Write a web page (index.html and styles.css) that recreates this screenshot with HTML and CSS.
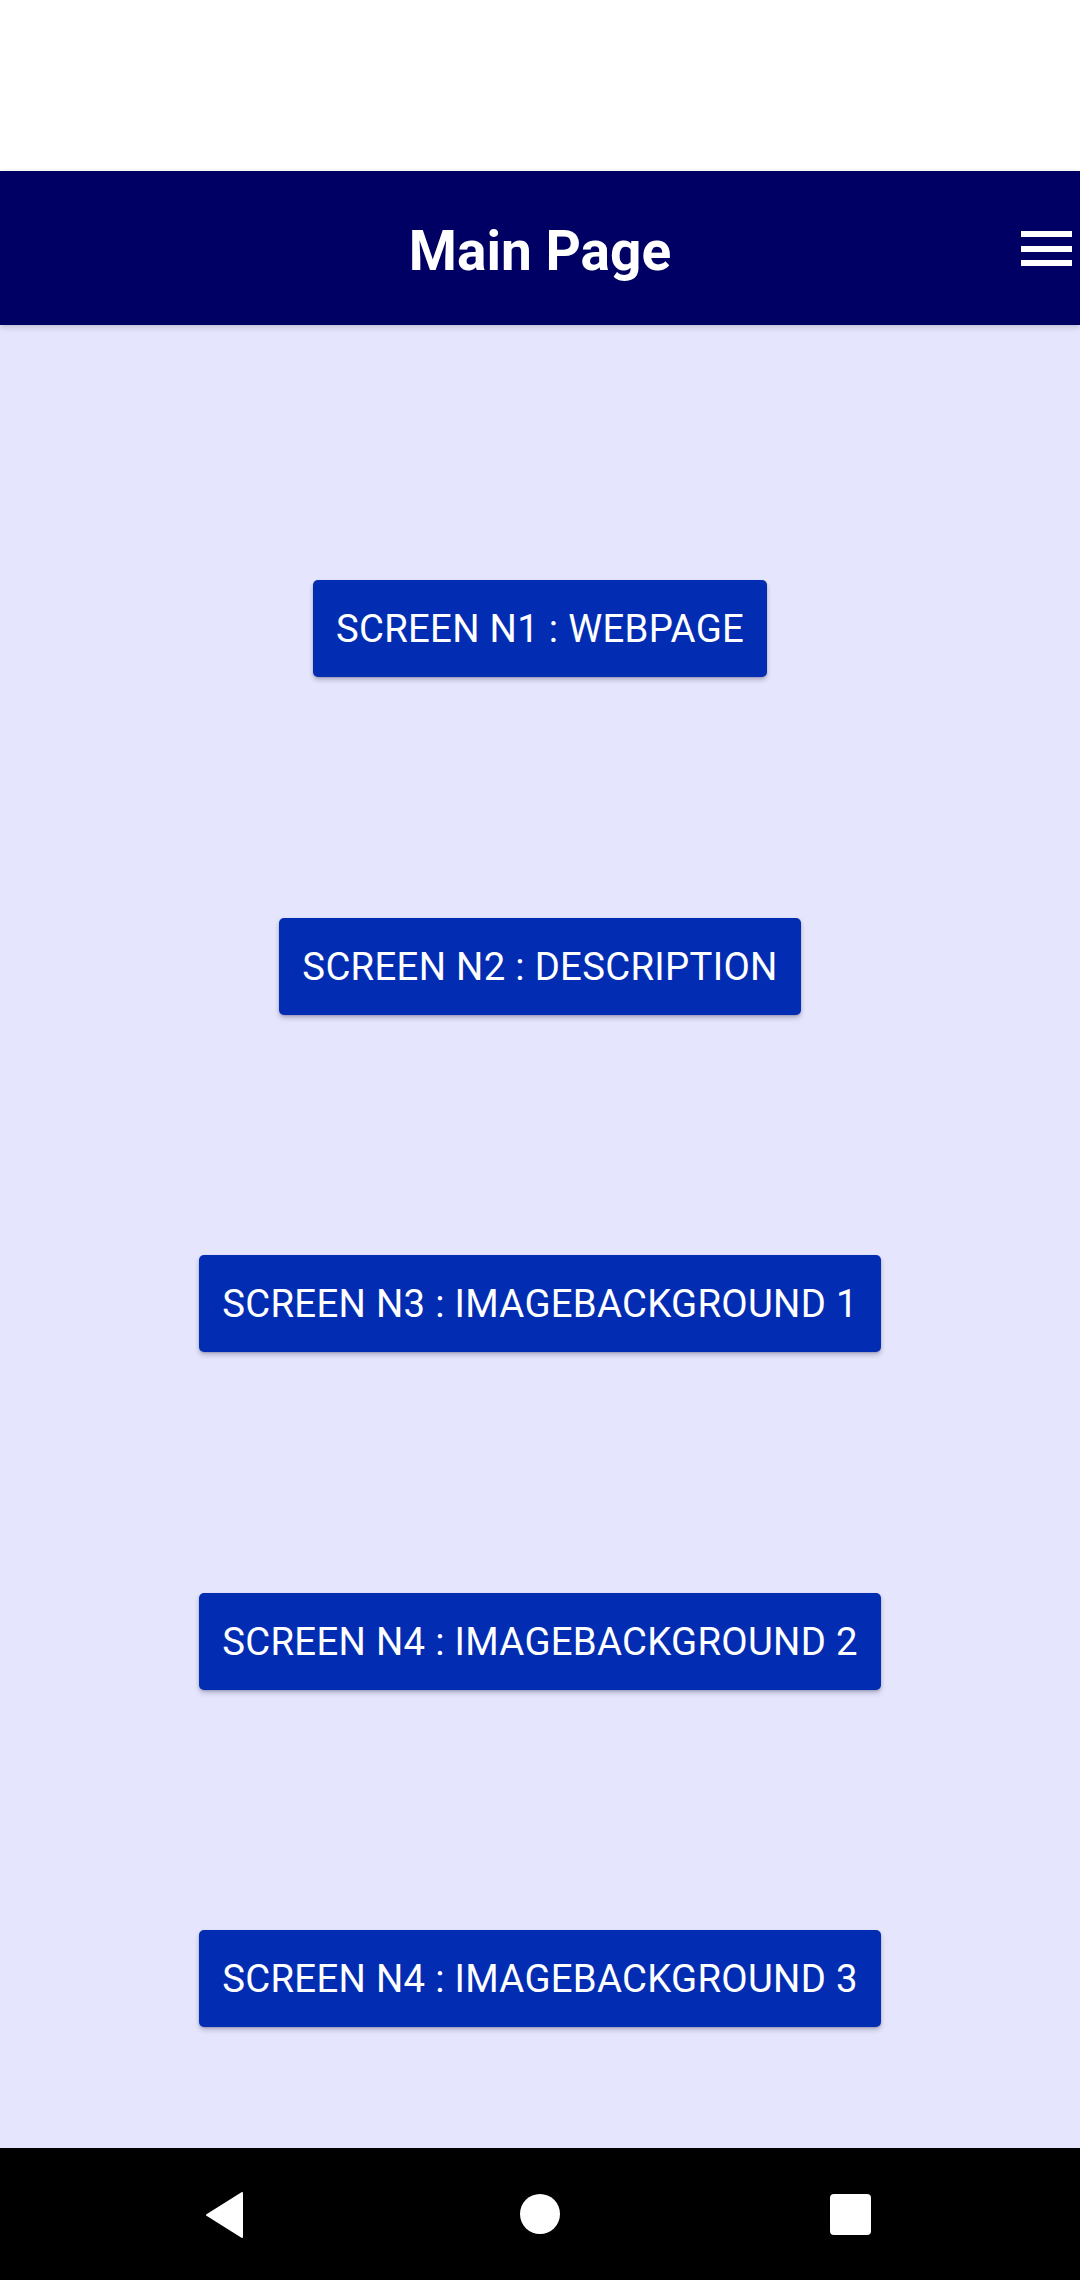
FILE: index.html
```html
<!DOCTYPE html>
<html>
<head>
<meta charset="utf-8">
<link rel="stylesheet" href="styles.css">
</head>
<body>
<div class="status"></div>
<header class="appbar">
  <h1 class="title">Main Page</h1>
  <div class="menu"><span></span><span></span><span></span></div>
</header>
<main class="content">
  <button class="btn">SCREEN N1 : WEBPAGE</button>
  <button class="btn">SCREEN N2 : DESCRIPTION</button>
  <button class="btn">SCREEN N3 : IMAGEBACKGROUND 1</button>
  <button class="btn">SCREEN N4 : IMAGEBACKGROUND 2</button>
  <button class="btn">SCREEN N4 : IMAGEBACKGROUND 3</button>
</main>
<nav class="navbar">
  <svg class="nav-back" width="40" height="46" viewBox="0 0 40 46"><path d="M37 1 L37 45 L2 23 Z" fill="#fff" stroke="#fff" stroke-width="2" stroke-linejoin="round"/></svg>
  <span class="nav-home"></span>
  <span class="nav-recent"></span>
</nav>
</body>
</html>
```
FILE: styles.css
```css
* { box-sizing: border-box; }
html, body {
  margin: 0;
  padding: 0;
  width: 1080px;
  height: 2280px;
  overflow: hidden;
  font-family: Roboto, "Noto Sans", sans-serif;
}
body {
  display: flex;
  flex-direction: column;
  background: #e5e5fd;
}
.status {
  height: 171px;
  background: #ffffff;
  flex: none;
}
.appbar {
  position: relative;
  height: 154px;
  flex: none;
  background: #000064;
  display: flex;
  align-items: center;
  justify-content: center;
  box-shadow: 0 2px 6px rgba(0,0,0,0.18);
  z-index: 2;
}
.title {
  margin: 0;
  color: #ffffff;
  font-size: 55px;
  font-weight: 700;
  line-height: 1;
  margin-top: 6px;
}
.menu {
  position: absolute;
  left: 1021px;
  top: 60px;
  width: 51px;
  display: flex;
  flex-direction: column;
  gap: 8.5px;
}
.menu span {
  display: block;
  height: 6px;
  background: #ffffff;
}
.content {
  flex: 1;
  display: flex;
  flex-direction: column;
  align-items: center;
  padding-top: 255px;
  gap: 240.6px;
}
.btn {
  height: 97px;
  padding: 0 23px;
  border: none;
  border-radius: 5px;
  background: #022db3;
  color: #ffffff;
  font-family: Roboto, "Noto Sans", sans-serif;
  font-size: 38.3px;
  font-weight: 400;
  letter-spacing: 0.3px;
  box-shadow: 0 3px 5px rgba(0,0,40,0.22), 0 1px 2px rgba(0,0,40,0.15);
}
.navbar {
  flex: none;
  height: 132px;
  background: #000000;
  position: relative;
}
.nav-back {
  position: absolute;
  left: 205px;
  top: 44px;
}
.nav-home {
  position: absolute;
  left: 520px;
  top: 46px;
  width: 40px;
  height: 40px;
  border-radius: 50%;
  background: #fff;
}
.nav-recent {
  position: absolute;
  left: 830px;
  top: 46px;
  width: 41px;
  height: 41px;
  border-radius: 4px;
  background: #fff;
}
```
